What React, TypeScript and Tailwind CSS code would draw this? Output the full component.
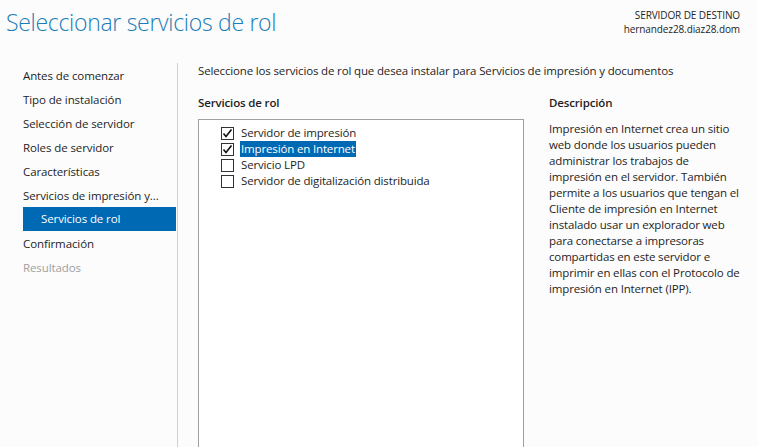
import React from "react";

const font = { fontFamily: '"Open Sans", "Noto Sans", "Liberation Sans", sans-serif' };

function Check({ checked }: { checked: boolean }) {
  return (
    <span className="w-[13px] h-[13px] border border-[#333333] bg-white flex items-center justify-center shrink-0">
      {checked && (
        <svg width="11" height="11" viewBox="0 0 11 11">
          <path d="M1.5 5.5 L4 8.5 L9.5 1.5" stroke="#111" strokeWidth="1.6" fill="none" />
        </svg>
      )}
    </span>
  );
}

export default function App() {
  const nav = [
    "Antes de comenzar",
    "Tipo de instalación",
    "Selección de servidor",
    "Roles de servidor",
    "Características",
    "Servicios de impresión y...",
  ];
  const items = [
    { label: "Servidor de impresión", checked: true, sel: false },
    { label: "Impresión en Internet", checked: true, sel: true },
    { label: "Servicio LPD", checked: false, sel: false },
    { label: "Servidor de digitalización distribuida", checked: false, sel: false },
  ];
  return (
    <div className="w-[758px] h-[447px] bg-[#fcfcfc] text-[#1e1e1e] overflow-hidden flex flex-col" style={font}>
      <div className="h-[63px] flex justify-between shrink-0">
        <div className="pl-[6px] pt-[5px] text-[23px] font-light text-[#1a7cb8] leading-[34px] tracking-[-0.3px]">
          Seleccionar servicios de rol
        </div>
        <div className="pr-[18px] pt-[8px] text-right text-[10px] leading-[14px] tracking-[-0.1px] text-[#1e1e1e]">
          <div>SERVIDOR DE DESTINO</div>
          <div>hernandez28.diaz28.dom</div>
        </div>
      </div>
      <div className="flex flex-1 min-h-0">
        <div className="w-[178px] border-r border-[#d0d0d0] pl-[23px] pr-[1px] text-[11.5px] tracking-[-0.1px] shrink-0">
          {nav.map((n) => (
            <div key={n} className="h-[24px] pt-[2px] flex items-center whitespace-nowrap">{n}</div>
          ))}
          <div className="h-[24px] flex items-center bg-[#0069b4] text-white pl-[18px]">Servicios de rol</div>
          <div className="h-[24px] pt-[2px] flex items-center">Confirmación</div>
          <div className="h-[24px] pt-[2px] flex items-center text-[#a0a0a0]">Resultados</div>
        </div>
        <div className="flex-1 pl-[20px] pt-0 flex flex-col text-[11.5px] tracking-[-0.15px]">
          <div className="h-[18px] mt-[-1px] flex items-center whitespace-nowrap">
            Seleccione los servicios de rol que desea instalar para Servicios de impresión y documentos
          </div>
          <div className="flex flex-1 mt-[13px] gap-[25px]">
            <div className="w-[326px] flex flex-col">
              <div className="h-[18px] pt-[1px] flex items-center font-semibold">Servicios de rol</div>
              <div className="mt-[8px] flex-1 border border-[#a0a0a0] border-b-0 bg-white pt-[5px] pl-[22px]">
                {items.map((it) => (
                  <div key={it.label} className="h-[16px] flex items-center gap-[6px]">
                    <Check checked={it.checked} />
                    <span className={it.sel ? "bg-[#0069b4] text-white px-[1px] leading-[16px]" : "px-[1px] leading-[16px]"}>
                      {it.label}
                    </span>
                  </div>
                ))}
              </div>
            </div>
            <div className="flex-1 pr-[20px]">
              <div className="h-[18px] pt-[1px] flex items-center font-semibold">Descripción</div>
              <div className="mt-[10px] leading-[16px] w-[192px]">
                Impresión en Internet crea un sitio web donde los usuarios pueden administrar los trabajos de impresión en el servidor. También permite a los usuarios que tengan el Cliente de impresión en Internet instalado usar un explorador web para conectarse a impresoras compartidas en este servidor e imprimir en ellas con el Protocolo de impresión en Internet (IPP).
              </div>
            </div>
          </div>
        </div>
      </div>
    </div>
  );
}
